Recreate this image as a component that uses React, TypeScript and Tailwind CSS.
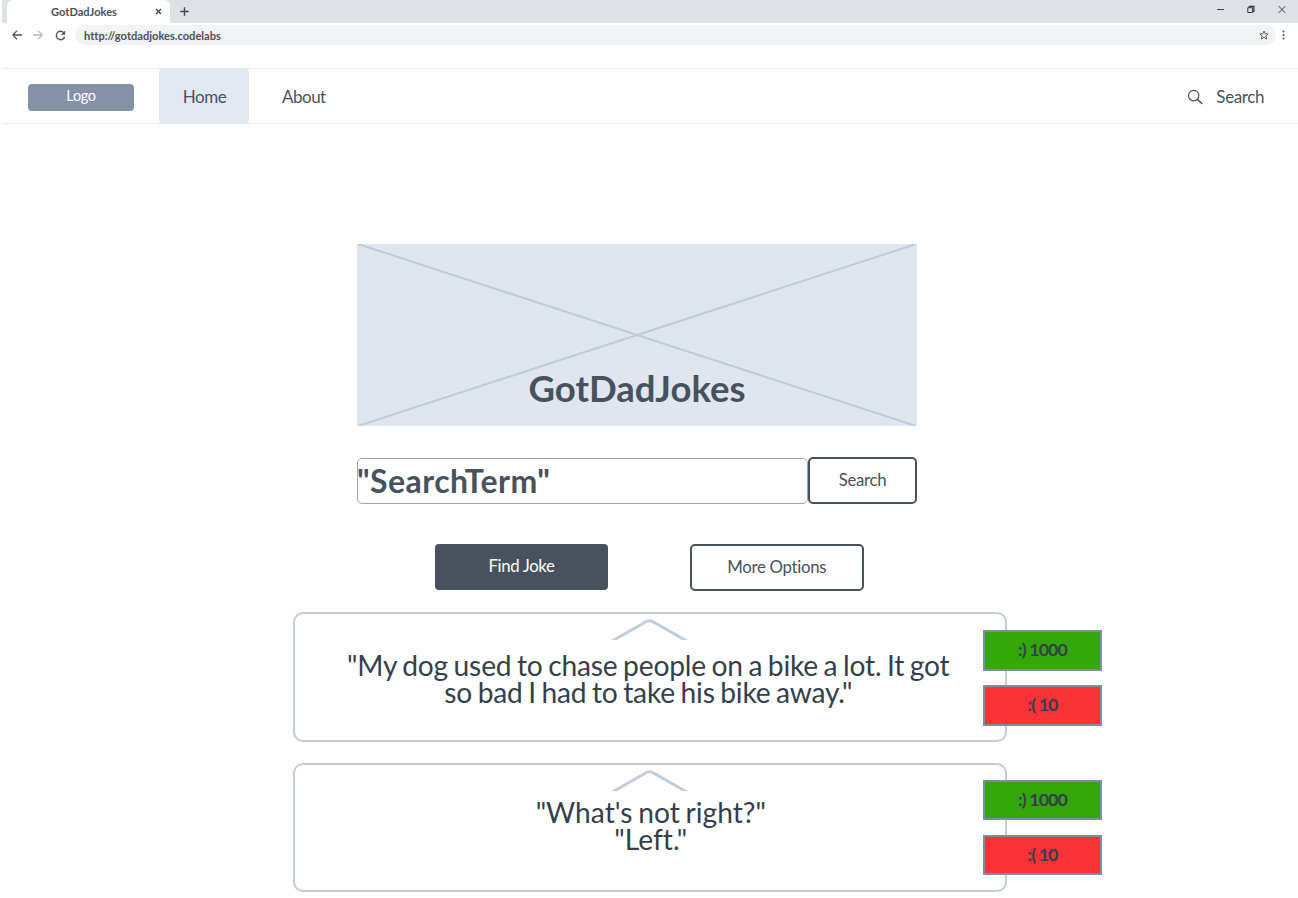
import React from "react";

type Joke = { lines: string[]; up: number; down: number };

const jokes: Joke[] = [
  {
    lines: [
      '"My dog used to chase people on a bike a lot. It got',
      'so bad I had to take his bike away."',
    ],
    up: 1000,
    down: 10,
  },
  { lines: ['"What\'s not right?"', '"Left."'], up: 1000, down: 10 },
];

function BrowserChrome() {
  return (
    <header className="ml-[2px] h-[68px] shrink-0">
      <div className="flex h-[23px] bg-[#dee1e6] pl-[5px] text-[#3c4653]">
        <div className="flex h-[23px] w-[163px] items-center rounded-t-[6px] bg-white pl-[44px] pr-[8px]">
          <span className="flex-1 text-[11.1px] font-bold leading-[23px] text-[#48525e]">GotDadJokes</span>
          <svg width="7" height="7" viewBox="0 0 7 7" stroke="#3f4650" strokeWidth="1.2">
            <path d="M1 1l5 5M6 1L1 6" />
          </svg>
        </div>
        <svg className="ml-[10px] mt-[7px]" width="9" height="9" viewBox="0 0 9 9" stroke="#3f4650" strokeWidth="1.4">
          <path d="M4.5 .3v8.4M.3 4.5h8.4" />
        </svg>
        <svg className="ml-auto mr-[23px] mt-[5px]" width="7" height="9" viewBox="0 0 7 9" stroke="#3f4650">
          <path d="M0 4.5h7" />
        </svg>
        <svg className="mr-[23px] mt-[5px]" width="8" height="9" viewBox="0 0 8 9" fill="none" stroke="#2f353d">
          <path d="M.8 2.7h4.8v4.8H.8z" strokeWidth="1" />
          <path d="M2.3 2.3V1.3h4.6v5H5.8" strokeWidth="1.2" />
        </svg>
        <svg className="mr-[12px] mt-[5px]" width="8" height="9" viewBox="0 0 8 9" stroke="#3f4650" strokeWidth="1">
          <path d="M.7 1.1l6.6 6.8M7.3 1.1L.7 7.9" />
        </svg>
      </div>
      <div className="flex h-[24px] items-center pl-[10px]">
        <svg width="10" height="10" viewBox="0 0 10 10" fill="none" stroke="#4d535b" strokeWidth="1.3">
          <path d="M10 5H1M5.1.6L.8 5l4.3 4.4" />
        </svg>
        <svg className="ml-[11px]" width="10" height="10" viewBox="0 0 10 10" fill="none" stroke="#b9bcc0" strokeWidth="1.3">
          <path d="M0 5h9M4.9.6L9.2 5 4.9 9.4" />
        </svg>
        <svg className="ml-[12px]" width="11" height="11" viewBox="0 0 11 11" fill="none" stroke="#4d535b" strokeWidth="1.4">
          <path d="M8.7 2.7A4.2 4.2 0 1 0 9.6 6.7" />
          <path d="M10.2.5v4.2H6z" fill="#4d535b" stroke="none" />
        </svg>
        <div className="ml-[9px] flex h-[20px] w-[1201px] items-center rounded-full bg-[#f1f3f4] pl-[9px] pr-[7px]">
          <span className="flex-1 pt-px text-[11.1px] font-bold leading-[20px] text-[#48525e]">http://gotdadjokes.codelabs</span>
          <svg width="10" height="10" viewBox="0 0 10 10" fill="none" stroke="#555b63">
            <path d="M5 1l1.2 2.7 2.9.3-2.2 2 .7 2.9L5 7.4 2.4 8.9 3.1 6 .9 4l2.9-.3z" />
          </svg>
        </div>
        <svg className="ml-[6px]" width="3" height="10" viewBox="0 0 3 10" fill="#555b63">
          <circle cx="1.5" cy="1.5" r="1.05" />
          <circle cx="1.5" cy="5" r="1.05" />
          <circle cx="1.5" cy="8.5" r="1.05" />
        </svg>
      </div>
    </header>
  );
}

function NavBar() {
  return (
    <nav className="ml-[2px] flex h-[56px] shrink-0 items-center border-y border-[#e9ebf1] text-[17px] tracking-[-0.4px] text-[#48525e]">
      <div className="ml-[26px] mt-[2px] h-[27px] w-[106px] rounded-[4px] bg-[#8491a7] text-center text-[14.4px] leading-[24px] tracking-[-0.3px] text-white">Logo</div>
      <a className="ml-[25px] h-full w-[90px] bg-[#e4e8f2] pl-px text-center leading-[56px]">Home</a>
      <a className="ml-[33px] pt-px leading-[55px] tracking-[-0.5px]">About</a>
      <div className="ml-auto mr-[34px] flex items-center pt-px">
        <svg width="16" height="16" viewBox="0 0 16 16" fill="none" stroke="#48525e" strokeWidth="1.2">
          <circle cx="6.7" cy="6.6" r="5.2" />
          <path d="M10.5 10.5l4.3 4" strokeWidth="1.6" strokeLinecap="round" />
        </svg>
        <span className="ml-[13px] leading-[55px]">Search</span>
      </div>
    </nav>
  );
}

function VoteButton({ label, tone, height }: { label: string; tone: "up" | "down"; height: string }) {
  const color = tone === "up" ? "bg-[#33a707]" : "bg-[#fa3338]";
  return (
    <button className={`flex w-[119px] justify-center border-2 border-[#7f8da1] text-[17.8px] font-bold leading-[34px] tracking-[-0.85px] text-[#353f4b] ${height} ${color}`}>
      {label}
    </button>
  );
}

function JokeCard({ joke, first }: { joke: Joke; first: boolean }) {
  const voteHeight = first ? "h-[41px]" : "h-[40px]";
  return (
    <article className="flex items-start">
      <div className={`flex w-[714.5px] flex-col items-center rounded-[10px] border-2 border-[#c1ccdb] bg-white ${first ? "h-[130px]" : "h-[129px]"}`}>
        <svg className="mt-[5px] h-[21px] shrink-0" width="78" height="21" viewBox="0 0 78 21" fill="none" stroke="#c1ccdb" strokeWidth="3">
          <path d="M-.5 23L34.5 3Q38.5 .5 42.5 3L77.5 23" />
        </svg>
        <p className={`whitespace-nowrap text-center text-[28.2px] leading-[27px] [word-spacing:-1.5px] text-[#353f4b] ${first ? "mt-[12px] pr-[3px] tracking-[-0.18px]" : "mt-[8px] pl-[2px]"}`}>
          {joke.lines.map((line) => (
            <span key={line} className="block">{line}</span>
          ))}
        </p>
      </div>
      <div className={`-ml-[24px] flex flex-col ${first ? "gap-[14px] pt-[18px]" : "gap-[15px] pt-[17px]"}`}>
        <VoteButton label={`:) ${joke.up}`} tone="up" height={voteHeight} />
        <VoteButton label={`:( ${joke.down}`} tone="down" height={voteHeight} />
      </div>
    </article>
  );
}

export default function App() {
  return (
    <div className="flex h-[898px] w-[1298px] flex-col overflow-hidden bg-white font-['Lato',sans-serif] [font-variant-ligatures:none]">
      <BrowserChrome />
      <NavBar />
      <main className="flex-1 text-[#48525e]">
        <section className="ml-[357px] mt-[120px] grid h-[182px] w-[560px] bg-[#dfe6ee]">
          <svg className="col-start-1 row-start-1" width="560" height="182" viewBox="0 0 560 182" stroke="#c1ccdb" strokeWidth="2">
            <path d="M1 0l558 182M559 0L1 182" />
          </svg>
          <h1 className="col-start-1 row-start-1 self-end pb-[14px] text-center text-[36.5px] font-bold leading-[48px]">GotDadJokes</h1>
        </section>
        <section className="ml-[357px] mt-[31px] flex w-[560px]">
          <div className="mt-[1px] h-[46px] w-[451px] rounded-[5px] border border-[#9aa6b7] text-[32px] font-bold leading-[43px] tracking-[0.45px]"><span className="-ml-px">"SearchTerm"</span></div>
          <button className="flex h-[47px] w-[109px] justify-center rounded-[5px] border-2 border-[#48525e] text-[16.8px] leading-[42px] tracking-[-0.3px]">Search</button>
        </section>
        <section className="ml-[435px] mt-[40px] flex h-[47px] items-start">
          <button className="flex h-[46px] w-[173px] justify-center rounded-[4px] bg-[#48525e] text-[16.8px] leading-[44px] tracking-[-0.35px] text-white">Find Joke</button>
          <button className="ml-[81.5px] flex h-[47px] w-[174.5px] justify-center rounded-[5px] border-2 border-[#48525e] text-[16.8px] leading-[41px] tracking-[-0.3px]">More Options</button>
        </section>
        <section className="ml-[292.5px] mt-[21px] flex flex-col gap-[21px]">
          {jokes.map((joke, i) => (
            <JokeCard key={i} joke={joke} first={i === 0} />
          ))}
        </section>
      </main>
    </div>
  );
}
